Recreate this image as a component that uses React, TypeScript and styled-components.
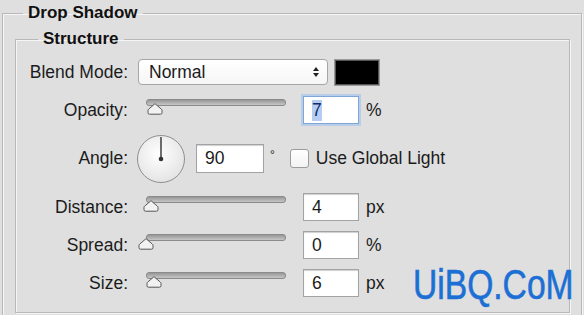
import React from 'react';
import styled, { createGlobalStyle } from 'styled-components';

const GlobalStyle = createGlobalStyle`
  html, body {
    margin: 0;
    padding: 0;
    background: #dfdfdf;
    overflow: hidden;
  }
  body {
    font-family: "Liberation Sans", Arial, sans-serif;
    color: #1b1b1b;
  }
`;

const Page = styled.div`
  position: relative;
  width: 584px;
  height: 315px;
  padding-top: 3px;
  box-sizing: border-box;
  overflow: hidden;
`;

const Group = styled.fieldset<{ $inner?: boolean }>`
  margin: ${(p) => (p.$inner ? '3px 0 0 0' : '0 2px')};
  padding: ${(p) => (p.$inner ? '9px 0 15px 0' : '3px 11px 20px 12px')};
  border: 1px solid #b8b8b8;
  box-shadow: inset 1px 1px 0 #f5f5f5, 1px 1px 0 #f5f5f5;
  min-width: 0;
`;

const Legend = styled.legend<{ $offset: number }>`
  margin-left: ${(p) => p.$offset}px;
  padding: 0 5px;
  font-size: 17px;
  font-weight: bold;
  line-height: 20px;
  color: #111;
`;

const Rows = styled.div`
  display: flex;
  flex-direction: column;
  gap: 10px;
`;

const Row = styled.div<{ $h: number }>`
  display: flex;
  align-items: center;
  height: ${(p) => p.$h}px;
`;

const Label = styled.span`
  width: 112px;
  flex-shrink: 0;
  margin-right: 10px;
  text-align: right;
  font-size: 17.5px;
  white-space: nowrap;
`;

const Select = styled.div`
  display: flex;
  align-items: center;
  justify-content: space-between;
  width: 190px;
  height: 26px;
  box-sizing: border-box;
  padding: 0 7px 0 10px;
  border: 1px solid #a6a6a6;
  border-radius: 4px;
  background: linear-gradient(#ffffff, #f6f6f6);
  font-size: 17.5px;
`;

const Swatch = styled.div`
  width: 46px;
  height: 27px;
  margin-left: 6px;
  box-sizing: border-box;
  background: #000;
  border: 1px solid #9a9a9a;
  box-shadow: inset 0 0 0 1px #555;
`;

const SliderBox = styled.div`
  display: flex;
  flex-direction: column;
  align-self: flex-start;
  flex-shrink: 0;
  width: 148px;
`;

const Track = styled.div`
  height: 5px;
  margin: 3px 0 0 8px;
  border: 1px solid #8a8a8a;
  border-radius: 3px;
  background: linear-gradient(#979797, #c6c6c6);
`;

const Thumb = styled.svg`
  display: block;
  margin-top: -3px;
`;

const Field = styled.div<{ $w: number; $h?: number; $gap: number; $focus?: boolean }>`
  display: flex;
  align-items: center;
  flex-shrink: 0;
  width: ${(p) => p.$w}px;
  height: ${(p) => p.$h ?? 28}px;
  margin-left: ${(p) => p.$gap}px;
  box-sizing: border-box;
  padding-left: 8px;
  background: #fff;
  border: 1px solid ${(p) => (p.$focus ? '#7fa6d4' : '#a3a3a3')};
  box-shadow: ${(p) => (p.$focus ? '0 0 0 2px #b7cde9' : 'inset 0 1px 1px #d0d0d0')};
  font-size: 17.5px;
`;

const Selected = styled.span`
  background: #b4cdf0;
  color: #0d2e6b;
`;

const Unit = styled.span`
  margin-left: 7px;
  font-size: 17.5px;
  white-space: nowrap;
`;

const Degree = styled.span`
  margin: -8px 0 0 6px;
  font-size: 12px;
`;

const Check = styled.div`
  width: 19px;
  height: 19px;
  margin-left: 15px;
  box-sizing: border-box;
  border: 1px solid #9c9c9c;
  border-radius: 3px;
  background: linear-gradient(#ffffff, #f3f3f3);
`;

const Watermark = styled.div`
  position: absolute;
  left: 413px;
  top: 261px;
  font-size: 42px;
  color: #1c6fd4;
  transform: scaleX(0.8);
  transform-origin: left top;
  white-space: nowrap;
  -webkit-text-stroke: 0.6px #1c6fd4;
`;

const SelectArrows = () => (
  <svg width="8" height="12" viewBox="0 0 8 12">
    <path d="M1 5 L4 1 L7 5 Z M1 7 L4 11 L7 7 Z" fill="#222" />
  </svg>
);

const Dial = () => (
  <svg width="50" height="50" viewBox="0 0 50 50" style={{ marginLeft: -2, flexShrink: 0 }}>
    <defs>
      <radialGradient id="dialFill" cx="0.45" cy="0.4" r="0.6">
        <stop offset="0" stopColor="#ffffff" />
        <stop offset="1" stopColor="#e4e4e4" />
      </radialGradient>
    </defs>
    <circle cx="25" cy="25" r="23.5" fill="url(#dialFill)" stroke="#8f8f8f" strokeWidth="1" />
    <line x1="25" y1="25" x2="25" y2="3" stroke="#333" strokeWidth="1.4" />
    <circle cx="25" cy="25" r="2.3" fill="#333" />
  </svg>
);

type SliderProps = { pos: number };

const Slider = ({ pos }: SliderProps) => (
  <SliderBox>
    <Track />
    <Thumb width="16" height="12" viewBox="0 0 16 12" style={{ marginLeft: pos }}>
      <path
        d="M2.5 11.2 L13.5 11.2 Q15 11.2 15 9.7 L15 7.5 Q15 6.6 14.2 6 L8.6 1.2 Q8 0.7 7.4 1.2 L1.8 6 Q1 6.6 1 7.5 L1 9.7 Q1 11.2 2.5 11.2 Z"
        fill="#f2f2f2"
        stroke="#555"
        strokeWidth="1"
      />
    </Thumb>
  </SliderBox>
);

type SliderRowProps = { label: string; pos: number; value: string; unit: string; focus?: boolean };

const SliderRow = ({ label, pos, value, unit, focus }: SliderRowProps) => (
  <Row $h={28}>
    <Label>{label}</Label>
    <Slider pos={pos} />
    <Field $w={56} $gap={17} $focus={focus}>
      {focus ? <Selected>{value}</Selected> : value}
    </Field>
    <Unit>{unit}</Unit>
  </Row>
);

export default function App() {
  return (
    <Page>
      <GlobalStyle />
      <Group>
        <Legend $offset={8}>Drop Shadow</Legend>
        <Group $inner>
          <Legend $offset={22}>Structure</Legend>
          <Rows>
            <Row $h={28}>
              <Label>Blend Mode:</Label>
              <Select>
                Normal
                <SelectArrows />
              </Select>
              <Swatch />
            </Row>
            <SliderRow label="Opacity:" pos={9} value="7" unit="%" focus />
            <Row $h={49}>
              <Label>Angle:</Label>
              <Dial />
              <Field $w={68} $h={29} $gap={10}>90</Field>
              <Degree>°</Degree>
              <Check />
              <Unit>Use Global Light</Unit>
            </Row>
            <SliderRow label="Distance:" pos={5} value="4" unit="px" />
            <SliderRow label="Spread:" pos={0} value="0" unit="%" />
            <SliderRow label="Size:" pos={8} value="6" unit="px" />
          </Rows>
        </Group>
      </Group>
      <Watermark>UiBQ.CoM</Watermark>
    </Page>
  );
}
